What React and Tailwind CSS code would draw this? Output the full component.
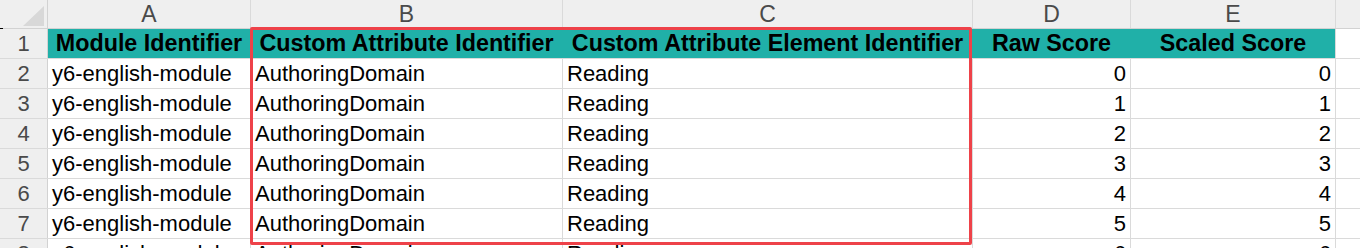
import React from "react";

const cols = [
  { key: "A", w: "w-[203px]" },
  { key: "B", w: "w-[312px]" },
  { key: "C", w: "w-[410px]" },
  { key: "D", w: "w-[158px]" },
  { key: "E", w: "w-[205px]" },
];

const headers = [
  "Module Identifier",
  "Custom Attribute Identifier",
  "Custom Attribute Element Identifier",
  "Raw Score",
  "Scaled Score",
];

const rows = [0, 1, 2, 3, 4, 5, 6].map((n) => ({
  num: n + 2,
  vals: ["y6-english-module", "AuthoringDomain", "Reading", String(n), String(n)],
}));

export default function App() {
  return (
    <div
      className="relative w-[1360px] h-[248px] overflow-hidden bg-white text-[22px] leading-none"
      style={{ fontFamily: '"Liberation Sans", Arial, sans-serif' }}
    >
      {/* column letters */}
      <div className="flex h-[29px] bg-[#efefef] border-b border-[#d2d2d2]">
        <div className="relative w-[48px] shrink-0 border-r border-[#d2d2d2]">
          <svg className="absolute left-[23px] top-[6px]" width="21" height="20" viewBox="0 0 21 20">
            <polygon points="21,0 21,20 0,20" fill="#d8d8d8" />
          </svg>
        </div>
        {cols.map((c) => (
          <div
            key={c.key}
            className={`${c.w} shrink-0 border-r border-[#dadada] flex items-center justify-center text-[#4a4a4a] text-[23px]`}
          >
            {c.key}
          </div>
        ))}
        <div className="flex-1" />
      </div>
      <div className="absolute left-0 top-[28px] w-[3px] h-[1px] bg-black" />

      {/* header row */}
      <div className="flex h-[30px] border-b border-[#dadada]">
        <div className="w-[48px] shrink-0 bg-[#efefef] border-r border-[#d2d2d2] flex items-center justify-center text-[#4a4a4a]">
          1
        </div>
        {cols.map((c, i) => (
          <div
            key={c.key}
            className={`${c.w} shrink-0 bg-[#20b0a8] flex items-center justify-center font-bold text-black text-[23.3px] whitespace-nowrap ${i < 4 ? "border-r border-[#20b0a8]" : "border-r border-[#dadada]"}`}
          >
            {headers[i]}
          </div>
        ))}
        <div className="flex-1" />
      </div>

      {/* data rows */}
      {rows.map((r) => (
        <div key={r.num} className="flex h-[30px] border-b border-[#dadada]">
          <div className="w-[48px] shrink-0 bg-[#efefef] border-r border-[#d2d2d2] flex items-center justify-center text-[#4a4a4a]">
            {r.num}
          </div>
          {cols.map((c, i) => (
            <div
              key={c.key}
              className={`${c.w} shrink-0 border-r border-[#dadada] flex items-center whitespace-nowrap text-black ${i >= 3 ? "justify-end pr-[4px]" : "pl-[4px]"}`}
            >
              {r.vals[i]}
            </div>
          ))}
          <div className="flex-1" />
        </div>
      ))}

      {/* selection box */}
      <div className="absolute left-[250px] top-[27px] w-[722px] h-[218px] border-[3px] border-[#ee4249] rounded-[2px] pointer-events-none" />
    </div>
  );
}
